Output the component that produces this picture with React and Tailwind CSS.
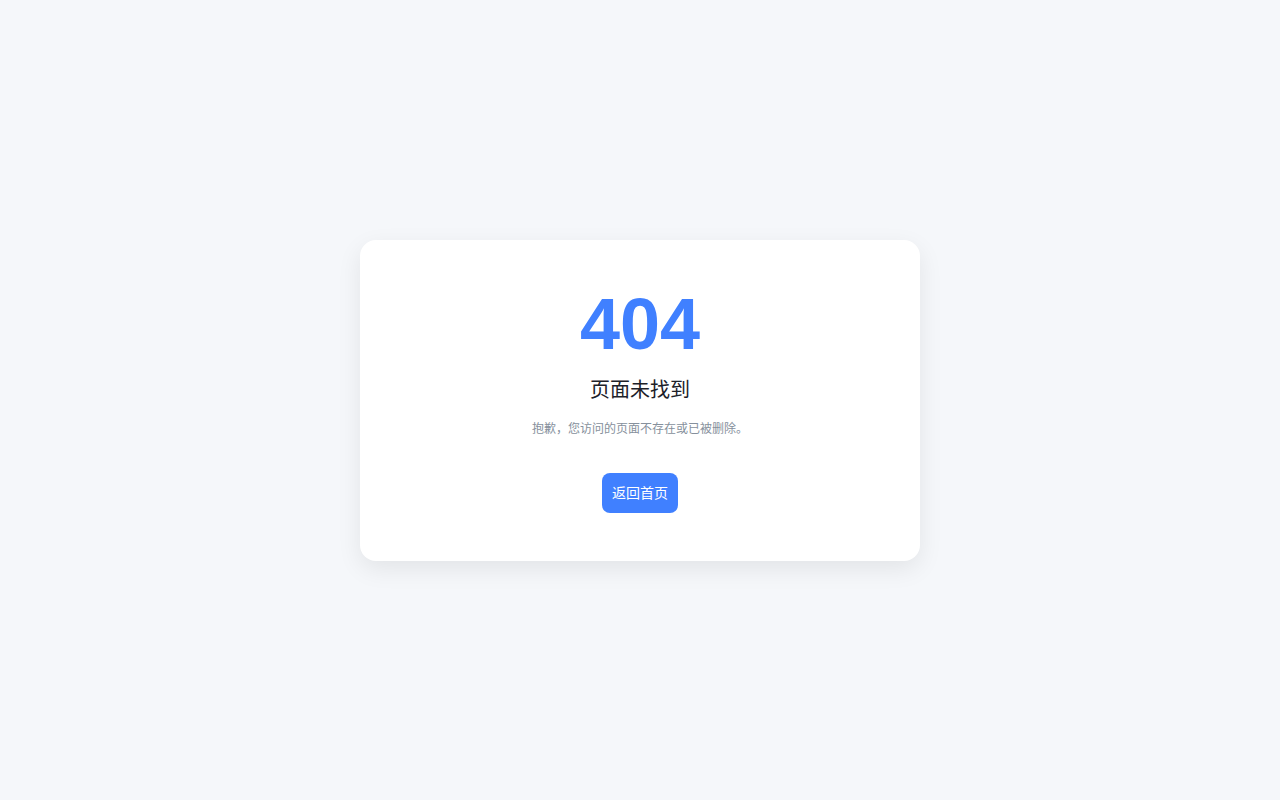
import React from 'react';

const App = () => {
  return (
    <div
      className="min-h-screen w-full bg-[#f5f7fa] flex items-center justify-center"
      style={{ fontFamily: '"Liberation Sans", "Noto Sans CJK SC", sans-serif' }}
    >
      {/* Card */}
      <div className="w-[560px] bg-white rounded-2xl shadow-[0_8px_24px_rgba(0,0,0,0.08)] px-12 pt-12 pb-12 flex flex-col items-center text-center">
        <h1 className="text-[72px] leading-none font-bold text-[#4080ff]">404</h1>
        <h2 className="mt-4 text-xl leading-7 text-[#1d2129]">页面未找到</h2>
        <p className="mt-4 text-xs leading-[18px] text-[#86909c]">抱歉，您访问的页面不存在或已被删除。</p>
        <button className="mt-[35px] h-10 w-[76px] rounded-lg bg-[#4080ff] text-white text-sm hover:bg-[#165dff]">
          返回首页
        </button>
      </div>
    </div>
  );
};

export default App;
